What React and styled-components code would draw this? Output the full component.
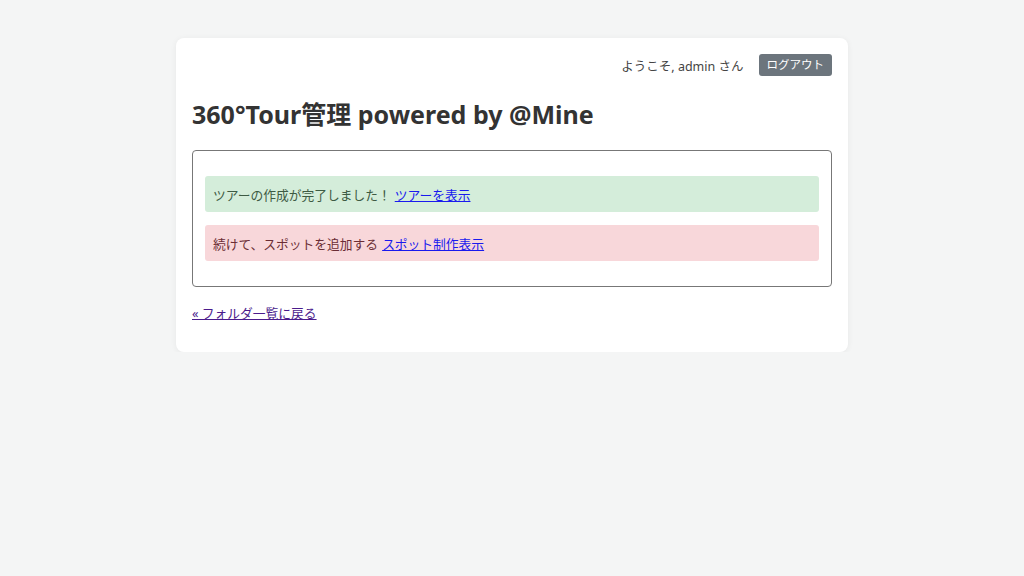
import React from "react";
import styled, { createGlobalStyle } from "styled-components";

const Global = createGlobalStyle`
  html, body { margin: 0; padding: 0; background: #f4f5f5; }
  body { font-family: "Noto Sans", "Noto Sans CJK JP", sans-serif; color: #333; font-size: 12.75px; }
`;

const Page = styled.div`
  display: flex;
  justify-content: center;
  padding-top: 38px;
`;

const Card = styled.div`
  width: 672px;
  box-sizing: border-box;
  background: #fff;
  border-radius: 8px;
  box-shadow: 0 1px 6px rgba(0, 0, 0, 0.06);
  padding: 16px 16px 30px;
`;

const TopBar = styled.div`
  display: flex;
  justify-content: flex-end;
  align-items: center;
  gap: 15px;
  height: 22px;
`;

const Welcome = styled.span`
  font-size: 12.5px;
  color: #444;
`;

const LogoutButton = styled.button`
  background: #6c757d;
  color: #fff;
  border: none;
  border-radius: 3px;
  font-family: inherit;
  font-size: 11.5px;
  height: 22px;
  padding: 0 8px;
  line-height: 22px;
`;

const Title = styled.h1`
  font-size: 25px;
  font-weight: 700;
  margin: 22px 0 20px;
  line-height: 32px;
  color: #333;
`;

const Panel = styled.div`
  border: 1px solid #777;
  border-radius: 4px;
  padding: 25px 12px 25px;
  display: flex;
  flex-direction: column;
  gap: 13px;
`;

const Alert = styled.div`
  border-radius: 3px;
  height: 36px;
  display: flex;
  align-items: center;
  padding: 0 8px;
  font-size: 12.75px;
  background: ${(p) => (p.$kind === "success" ? "#d4edda" : "#f8d7da")};
  color: ${(p) => (p.$kind === "success" ? "#3d5a43" : "#6b2d34")};
`;

const Link = styled.a`
  color: #1a1aee;
  text-decoration: underline;
  margin-left: 4px;
`;

const BackLink = styled.a`
  display: inline-block;
  margin-top: 16px;
  color: #4b1b8c;
  text-decoration: underline;
  font-size: 12.75px;
`;

export default function App() {
  return (
    <>
      <Global />
      <Page>
        <Card>
          <TopBar>
            <Welcome>ようこそ, admin さん</Welcome>
            <LogoutButton>ログアウト</LogoutButton>
          </TopBar>
          <Title>360°Tour管理 powered by @Mine</Title>
          <Panel>
            <Alert $kind="success">
              ツアーの作成が完了しました！<Link href="#">ツアーを表示</Link>
            </Alert>
            <Alert $kind="danger">
              続けて、スポットを追加する<Link href="#">スポット制作表示</Link>
            </Alert>
          </Panel>
          <BackLink href="#">« フォルダ一覧に戻る</BackLink>
        </Card>
      </Page>
    </>
  );
}
